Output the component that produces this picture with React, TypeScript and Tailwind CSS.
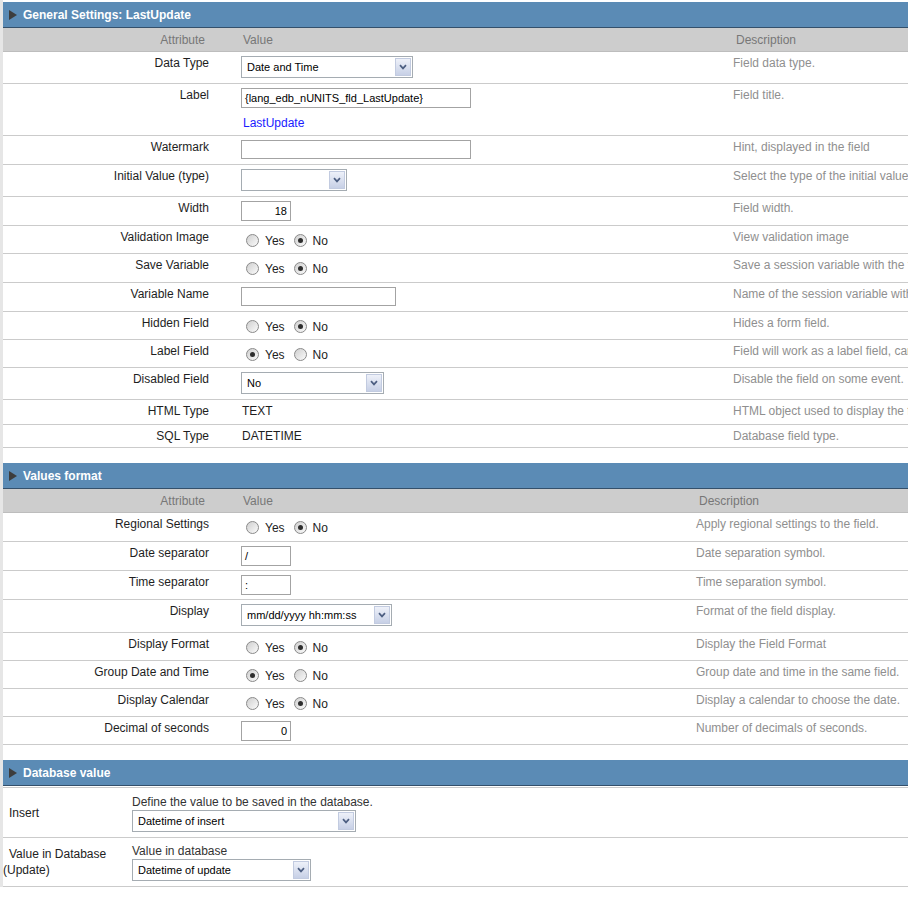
import React from 'react';

type Row = {
  label: string;
  h: string;
  radio?: boolean;
  value: React.ReactNode;
  desc: string;
};

const Radio = ({ on }: { on: boolean }) => (
  <span className="inline-flex h-[13px] w-[13px] shrink-0 items-center justify-center rounded-full border border-[#8a8a8a] bg-linear-to-br from-[#cfcfcf] to-[#fbfbfb]">
    {on && <span className="h-[5px] w-[5px] rounded-full bg-[#2e2e2e]" />}
  </span>
);

const YesNo = ({ yes }: { yes: boolean }) => (
  <div className="flex items-center pl-[5px] text-[12px] leading-[13px] text-[#222]">
    <Radio on={yes} />
    <span className="ml-[6px] mt-[2px]">Yes</span>
    <span className="ml-[9px] flex">
      <Radio on={!yes} />
    </span>
    <span className="ml-[6px] mt-[2px]">No</span>
  </div>
);

const Select = ({ w, text }: { w: string; text: string }) => (
  <div className={`flex h-[22px] items-stretch border border-[#a5acb2] bg-white ${w}`}>
    <span className="flex-1 truncate pl-[5px] text-[11px] leading-[20px] text-black">{text}</span>
    <span className="m-[1px] flex w-[16px] items-center justify-center border border-[#c2cbe0] bg-linear-to-b from-[#eef1f9] to-[#c7d0e6]">
      <svg width="8" height="6" viewBox="0 0 8 6">
        <path d="M1 1.2 L4 4.4 L7 1.2" stroke="#4d5f82" strokeWidth="1.7" fill="none" />
      </svg>
    </span>
  </div>
);

const Input = ({ w, h = 'h-[20px]', value = '', right = false }: { w: string; h?: string; value?: string; right?: boolean }) => (
  <div
    className={`${w} ${h} border border-[#a3a3a3] bg-white px-[3px] text-[11px] leading-[18px] text-black ${right ? 'text-right' : ''}`}
  >
    {value}
  </div>
);

const Bar = ({ title }: { title: string }) => (
  <div className="flex h-[26px] items-center border-b border-[#34506b] bg-[#5b8bb5] pl-[6px]">
    <svg width="8" height="10" viewBox="0 0 8 10">
      <path d="M0 0 L8 5 L0 10Z" fill="#3d3d3d" />
    </svg>
    <span className="ml-[6px] text-[12px] font-bold text-white">{title}</span>
  </div>
);

const general: Row[] = [
  { label: 'Data Type', h: 'h-[32px]', value: <Select w="w-[172px]" text="Date and Time" />, desc: 'Field data type.' },
  {
    label: 'Label',
    h: 'h-[52px]',
    value: (
      <div>
        <Input w="w-[230px]" value="{lang_edb_nUNITS_fld_LastUpdate}" />
        <div className="mt-[8px] pl-[2px] text-[12px] leading-[14px] text-[#1a1aff]">LastUpdate</div>
      </div>
    ),
    desc: 'Field title.',
  },
  { label: 'Watermark', h: 'h-[29px]', value: <Input w="w-[230px]" h="h-[19px]" />, desc: 'Hint, displayed in the field' },
  { label: 'Initial Value (type)', h: 'h-[32px]', value: <Select w="w-[106px]" text="" />, desc: 'Select the type of the initial value of the field' },
  { label: 'Width', h: 'h-[29px]', value: <Input w="w-[50px]" value="18" right />, desc: 'Field width.' },
  { label: 'Validation Image', h: 'h-[28px]', radio: true, value: <YesNo yes={false} />, desc: 'View validation image' },
  { label: 'Save Variable', h: 'h-[29px]', radio: true, value: <YesNo yes={false} />, desc: 'Save a session variable with the field value' },
  { label: 'Variable Name', h: 'h-[29px]', value: <Input w="w-[155px]" h="h-[19px]" />, desc: 'Name of the session variable with the field value' },
  { label: 'Hidden Field', h: 'h-[28px]', radio: true, value: <YesNo yes={false} />, desc: 'Hides a form field.' },
  { label: 'Label Field', h: 'h-[28px]', radio: true, value: <YesNo yes />, desc: "Field will work as a label field, can't be edited" },
  { label: 'Disabled Field', h: 'h-[32px]', value: <Select w="w-[143px]" text="No" />, desc: 'Disable the field on some event.' },
  { label: 'HTML Type', h: 'h-[25px]', value: <span className="pl-[1px]">TEXT</span>, desc: 'HTML object used to display the field' },
  { label: 'SQL Type', h: 'h-[23px]', value: <span className="pl-[1px]">DATETIME</span>, desc: 'Database field type.' },
];

const format: Row[] = [
  { label: 'Regional Settings', h: 'h-[29px]', radio: true, value: <YesNo yes={false} />, desc: 'Apply regional settings to the field.' },
  { label: 'Date separator', h: 'h-[29px]', value: <Input w="w-[50px]" value="/" />, desc: 'Date separation symbol.' },
  { label: 'Time separator', h: 'h-[29px]', value: <Input w="w-[50px]" value=":" />, desc: 'Time separation symbol.' },
  { label: 'Display', h: 'h-[33px]', value: <Select w="w-[151px]" text="mm/dd/yyyy hh:mm:ss" />, desc: 'Format of the field display.' },
  { label: 'Display Format', h: 'h-[28px]', radio: true, value: <YesNo yes={false} />, desc: 'Display the Field Format' },
  { label: 'Group Date and Time', h: 'h-[28px]', radio: true, value: <YesNo yes />, desc: 'Group date and time in the same field.' },
  { label: 'Display Calendar', h: 'h-[28px]', radio: true, value: <YesNo yes={false} />, desc: 'Display a calendar to choose the date.' },
  { label: 'Decimal of seconds', h: 'h-[28px]', value: <Input w="w-[50px]" value="0" right />, desc: 'Number of decimals of seconds.' },
];

const Table = ({ title, rows, cols }: { title: string; rows: Row[]; cols: string }) => (
  <div>
    <Bar title={title} />
    <div className={`grid h-[24px] items-center border-b border-[#bdbdbd] bg-[#cdcdcd] text-[12px] text-[#777] ${cols}`}>
      <span className="pr-[36px] text-right">Attribute</span>
      <span className="pl-[2px]">Value</span>
      <span className="pl-[3px]">Description</span>
    </div>
    {rows.map((r) => (
      <div key={r.label} className={`grid border-b border-[#cbcbcb] text-[12px] leading-[14px] ${cols} ${r.h}`}>
        <div className="pr-[32px] pt-[4px] text-right text-[#1e1e1e]">{r.label}</div>
        <div className={r.radio ? 'pt-[7px]' : 'pt-[4px] text-[#1e1e1e]'}>{r.value}</div>
        <div className="whitespace-nowrap pt-[4px] text-[#8f8f8f]">{r.desc}</div>
      </div>
    ))}
  </div>
);

export default function App() {
  return (
    <div className="min-h-screen w-full overflow-hidden bg-white font-['Liberation_Sans',Arial,sans-serif]">
      <div className="w-[1150px] border-l-[3px] border-[#e6e6e6] pt-[2px]">
        <Table title="General Settings: LastUpdate" rows={general} cols="grid-cols-[238px_492px_1fr]" />
        <div className="h-[15px]" />
        <Table title="Values format" rows={format} cols="grid-cols-[238px_455px_1fr]" />
        <div className="h-[15px]" />
        <div>
          <Bar title="Database value" />
          <div className="h-[2px] border-b border-[#cbcbcb]" />
          <div className="grid h-[50px] grid-cols-[129px_1fr] border-b border-[#cbcbcb] text-[12px] text-[#222]">
            <div className="flex items-center pl-[6px] leading-[16px]">Insert</div>
            <div className="pt-[7px]">
              <div className="leading-[14px] text-[#333]">Define the value to be saved in the database.</div>
              <div className="mt-[1px]">
                <Select w="w-[224px]" text="Datetime of insert" />
              </div>
            </div>
          </div>
          <div className="grid h-[49px] grid-cols-[129px_1fr] border-b border-[#cbcbcb] text-[12px] text-[#222]">
            <div className="flex items-center leading-[16px] indent-[6px]">Value in Database (Update)</div>
            <div className="pt-[6px]">
              <div className="leading-[14px] text-[#333]">Value in database</div>
              <div className="mt-[1px]">
                <Select w="w-[179px]" text="Datetime of update" />
              </div>
            </div>
          </div>
        </div>
      </div>
    </div>
  );
}
